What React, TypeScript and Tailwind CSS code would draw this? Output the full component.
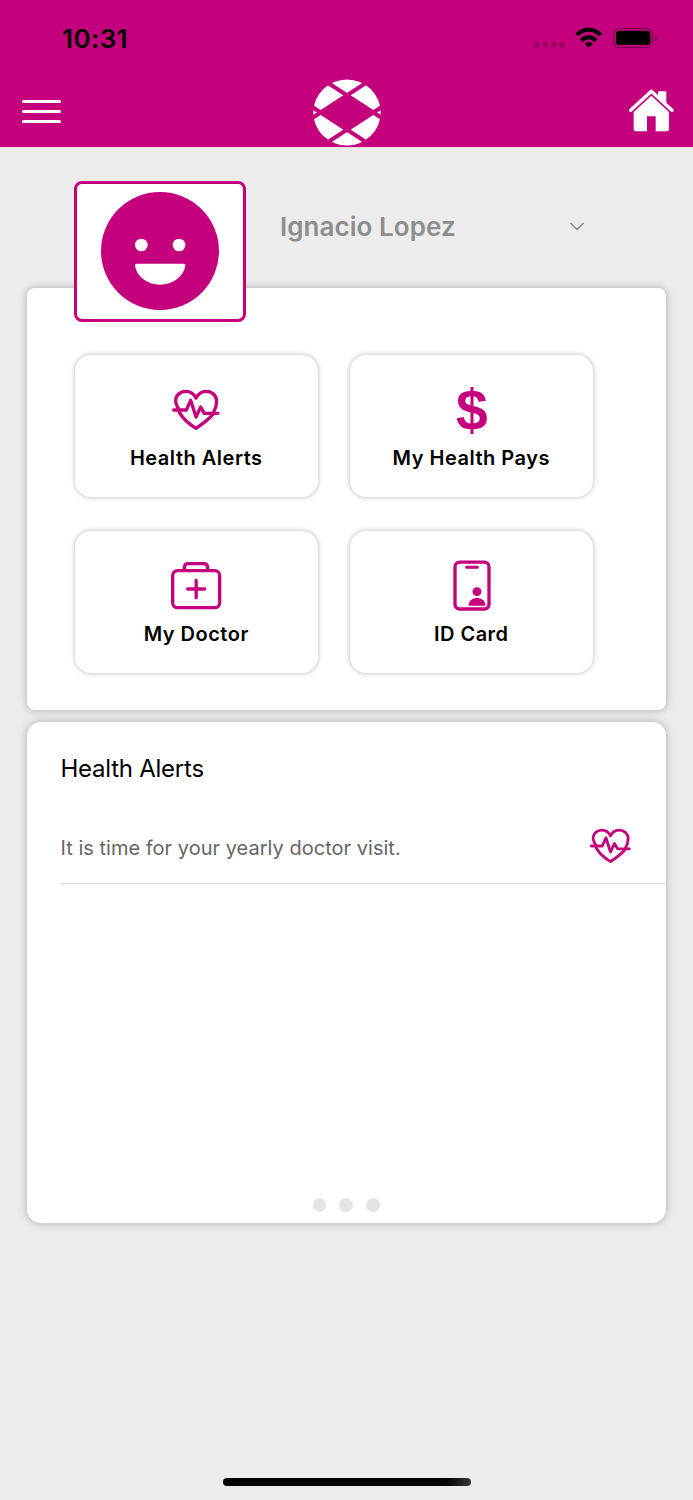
import type { ReactNode } from "react"

const tiles = [
    { name: "Health Alerts", icon: <HeartIcon className="w-[48px] h-[42px]" /> },
    { name: "My Health Pays", icon: <DollarIcon /> },
    { name: "My Doctor", icon: <DoctorIcon /> },
    { name: "ID Card", icon: <IdCardIcon /> },
]

const alerts = [
    { text: "It is time for your yearly doctor visit." },
]

function HeartIcon({ className }: { className: string }) {
    return (
        <svg viewBox="336 147 144 126" className={className} fill="none" stroke="#c4007d" strokeWidth="10" strokeLinecap="round" strokeLinejoin="round">
            <path d="M358 210C351 199 347 190 347 182C347 166 361 154 377 154C391 154 402 162 408 174C414 162 425 154 439 154C456 154 470 167 470 184C470 196 467 206 461 216M358 217C369 236 387 252 408 265C426 253 445 239 458 224" />
            <path d="M341 210H379L392 181L408 231L422 201L433 220H474" />
        </svg>
    )
}

function DollarIcon() {
    return <span className="font-['Liberation_Sans',sans-serif] text-[57px] leading-[52px] font-bold text-[#c4007d] ml-px">$</span>
}

function DoctorIcon() {
    return (
        <svg viewBox="330 121 156 156" className="w-[52px] h-[52px]" fill="none" stroke="#c4007d" strokeWidth="10" strokeLinecap="round">
            <rect x="338" y="153" width="141" height="111" rx="15" />
            <path d="M373 151V144Q373 132 385 132H431Q443 132 443 144V151" />
            <path d="M383 208H434M408.500 182V234" />
        </svg>
    )
}

function IdCardIcon() {
    return (
        <svg viewBox="336 121 120 156" className="w-[40px] h-[52px] ml-px" fill="none" stroke="#c4007d" strokeWidth="10" strokeLinecap="round">
            <rect x="345" y="127.500" width="102" height="140.500" rx="14" />
            <path d="M380 142.500H412" strokeWidth="9" />
            <g fill="#c4007d" stroke="none">
                <circle cx="411" cy="216" r="13.500" />
                <path d="M386 258V254C388 242 398 235 411 235C424 235 434 242 436 254V258Z" />
            </g>
        </svg>
    )
}

function Logo() {
    return (
        <svg viewBox="68 41 204 201" className="w-[68px] h-[67px]">
            <ellipse cx="170" cy="141.500" rx="101" ry="99" fill="#fff" />
            <path d="M170 90L249 141L170 193L91 141Z" fill="#c4007d" />
            <path d="M101 45L285 165M239 45L55 165M101 238L285 118M239 238L55 118" stroke="#c4007d" strokeWidth="12" />
        </svg>
    )
}

function StatusIcons() {
    return (
        <svg viewBox="36 48 378 72" className="w-[126px] h-[24px]">
            <g fillOpacity="0.2">
                <rect x="42" y="96" width="17" height="17" rx="6" />
                <rect x="67" y="96" width="17" height="17" rx="6" />
                <rect x="92" y="96" width="17" height="17" rx="6" />
                <rect x="117" y="96" width="17" height="17" rx="6" />
            </g>
            <g fill="none" stroke="#000" strokeWidth="12">
                <path d="M170 75Q185 59 206 59T242 75" />
                <path d="M184 92Q193 81.500 206 81.500T228 92" />
            </g>
            <path d="M194 101Q206 91 218 101L209 110Q206 113 203 110Z" />
            <rect x="282" y="55.500" width="116" height="57" rx="16" fill="none" stroke="#000" strokeOpacity="0.4" strokeWidth="3.500" />
            <rect x="288" y="62" width="103" height="43" rx="10" />
            <path d="M405 75Q411 78 411 84T405 93Z" fillOpacity="0.45" />
        </svg>
    )
}

function HomeIcon() {
    return (
        <svg viewBox="326 237 135 129" className="w-[45px] h-[43px]" fill="#fff">
            <path d="M413 247Q413 244 416 244H435Q438 244 438 247V283L413 260Z" />
            <path d="M331 301L393 244L455 301" fill="none" stroke="#fff" strokeWidth="10" strokeLinecap="round" strokeLinejoin="round" />
            <path d="M340 306L393 257L446 306V357Q446 364 439 364H406V319H380V364H347Q340 364 340 357Z" />
        </svg>
    )
}

function Avatar() {
    return (
        <div className="relative z-10 w-[172px] h-[141px] pt-[8px] shrink-0 flex items-start justify-center bg-white border-[3px] border-[#c4007d] rounded-[8px]">
            <svg viewBox="123 66 354 354" className="w-[118px] h-[118px]">
                <circle cx="300" cy="243" r="177" fill="#c4007d" />
                <g fill="#fff">
                    <circle cx="244" cy="225" r="19" />
                    <circle cx="357" cy="225" r="19" />
                    <path d="M230 281H371Q377 281 376 288C370 320 339 344 300 344S231 320 225 288Q224 281 230 281Z" />
                </g>
            </svg>
        </div>
    )
}

function Tile({ name, icon }: { name: string; icon: ReactNode }) {
    return (
        <button className="h-[142.5px] pt-[29.5px] flex flex-col items-center bg-white rounded-[16px] shadow-[0_0_5px_rgba(0,0,0,0.3)]">
            <span className="h-[52px] flex items-center justify-center">{icon}</span>
            <span className="mt-[10px] text-[20px] leading-6 font-semibold tracking-[0.5px] text-black">{name}</span>
        </button>
    )
}

export default function App() {
    return (
        <div className="w-[693px] h-[1500px] flex flex-col bg-[#ececec] font-[Inter,sans-serif] overflow-hidden">
            <header className="h-[148px] shrink-0 bg-[#c4007d] border-b border-[#f3d5e7]">
                <div className="h-[76px] pl-[62px] pr-[35px] flex items-center justify-between">
                    <span className="pt-px text-[26px] leading-8 font-semibold tracking-[0.4px] text-black">10:31</span>
                    <StatusIcons />
                </div>
                <nav className="h-[71px] pl-[22px] pr-[19px] flex items-center justify-between">
                    <div className="w-[39px] flex flex-col gap-[6.500px]">
                        <span className="h-[3.300px] rounded-full bg-white" />
                        <span className="h-[3.300px] rounded-full bg-white" />
                        <span className="h-[3.300px] rounded-full bg-white" />
                    </div>
                    <div className="pt-px ml-[3px]"><Logo /></div>
                    <div className="pb-[2px]"><HomeIcon /></div>
                </nav>
            </header>

            <section className="h-[140px] shrink-0 pl-[74px] pt-[33px] flex items-start">
                <Avatar />
                <div className="ml-[34px] w-[304px] h-[91px] flex items-center justify-between">
                    <h1 className="pt-px text-[26px] leading-8 font-semibold tracking-[0.05px] text-[#8e8e8e]">Ignacio Lopez</h1>
                    <svg viewBox="0 0 14 9" className="w-[14px] h-[9px]" fill="none" stroke="#8e8e8e" strokeWidth="1.700" strokeLinecap="round" strokeLinejoin="round">
                        <path d="M1 1.500L7 7.500L13 1.500" />
                    </svg>
                </div>
            </section>

            <section className="mx-[27px] h-[422px] shrink-0 pl-[48px] pt-[66.5px] bg-white rounded-[8px] shadow-[0_0_8px_rgba(0,0,0,0.28)]">
                <div className="grid grid-cols-[242.5px_242.5px] gap-x-[32.5px] gap-y-[33.5px]">
                    {tiles.map((tile) => (
                        <Tile key={tile.name} name={tile.name} icon={tile.icon} />
                    ))}
                </div>
            </section>

            <section className="mx-[27px] mt-[11.5px] h-[501.5px] shrink-0 pl-[33px] flex flex-col bg-white rounded-[14px] shadow-[0_0_8px_rgba(0,0,0,0.28)]">
                <h2 className="mt-[31.5px] ml-[0.5px] text-[24px] leading-8 tracking-[-0.25px] text-black">Health Alerts</h2>
                <ul className="mt-[26px]">
                    {alerts.map((alert) => (
                        <li key={alert.text} className="h-[73px] pr-[35px] flex items-center justify-between border-b border-[#dcdcdc]">
                            <span className="pt-px ml-[0.5px] text-[20px] leading-6 tracking-[0.02px] text-[#666]">{alert.text}</span>
                            <HeartIcon className="w-[41px] h-[36px] mb-[2px]" />
                        </li>
                    ))}
                </ul>
                <div className="mt-auto mb-[11.5px] pr-[33.5px] flex justify-center gap-[13px]">
                    <span className="size-[13.8px] rounded-full bg-[#e4e4e4]" />
                    <span className="size-[13.8px] rounded-full bg-[#e4e4e4]" />
                    <span className="size-[13.8px] rounded-full bg-[#e4e4e4]" />
                </div>
            </section>

            <div className="mt-auto mb-[14px] self-center w-[248px] h-[8px] shrink-0 rounded-full bg-linear-to-r from-black from-85% to-[#383838]" />
        </div>
    )
}
